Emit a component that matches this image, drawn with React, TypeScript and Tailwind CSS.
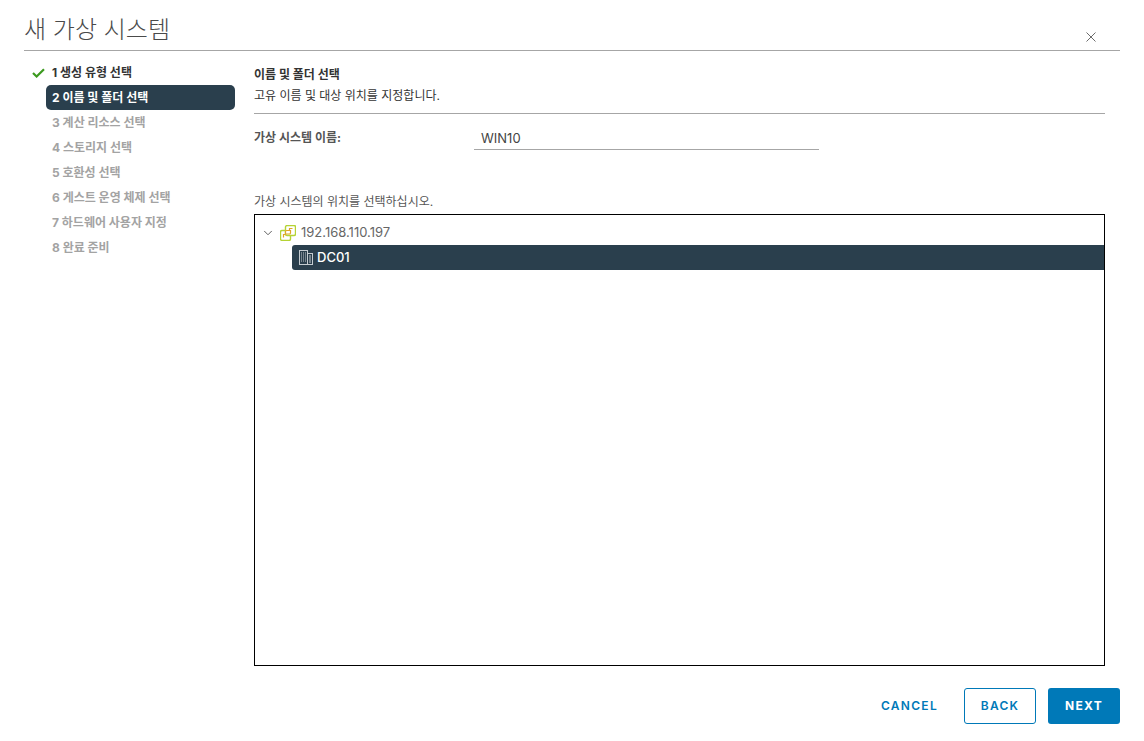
import { ChevronDown } from "lucide-react";

const steps = [
  "1 생성 유형 선택",
  "2 이름 및 폴더 선택",
  "3 계산 리소스 선택",
  "4 스토리지 선택",
  "5 호환성 선택",
  "6 게스트 운영 체제 선택",
  "7 하드웨어 사용자 지정",
  "8 완료 준비",
];

const font = "font-['Inter','Noto_Sans_CJK_KR',sans-serif]";

function VcenterIcon() {
  return (
    <svg width="16" height="16" viewBox="0 0 16 16" fill="none" className="shrink-0">
      <rect x="0.5" y="5.5" width="10" height="10" rx="1.5" fill="#fff" stroke="#b5d334" strokeWidth="1.4" />
      <rect x="5.5" y="0.5" width="10" height="10" rx="1.5" fill="#fff" stroke="#b5d334" strokeWidth="1.4" />
      <path d="M5.5 8.5V6.5a1 1 0 0 1 1-1h4v2.5a1 1 0 0 1-1 1h-4z" fill="#fff" stroke="#e0a526" strokeWidth="1.2" />
      <path d="M3.5 12.5v-3h2M12.5 3.5h-3v2" stroke="#e0a526" strokeWidth="1.2" />
    </svg>
  );
}

function DatacenterIcon() {
  return (
    <svg width="14" height="15" viewBox="0 0 14 15" fill="none" className="shrink-0" stroke="#c5ccd1">
      <rect x="0.5" y="0.5" width="8" height="14" />
      <rect x="8.5" y="3.5" width="5" height="11" />
      <path d="M2 3h1M4 3h1M6 3h1M2 5h1M4 5h1M6 5h1M2 7h1M4 7h1M6 7h1M2 9h1M4 9h1M6 9h1M2 11h1M4 11h1M6 11h1M10 6h2M10 8h2M10 10h2M10 12h2" />
    </svg>
  );
}

export default function App() {
  return (
    <div className={`${font} w-[1144px] h-[741px] bg-white flex flex-col px-6 text-[#333]`}>
      <header className="h-[51px] shrink-0 flex items-end justify-between border-b border-[#a6a6a6] pb-[3px]">
        <h1 className="text-[24px] leading-[34px] font-extralight text-[#4a4a4a]">새 가상 시스템</h1>
        <svg width="10" height="10" viewBox="0 0 10 10" className="mr-6 mb-[5px]" stroke="#6b6b6b" strokeWidth="1">
          <path d="M0.5 0.5l9 9M9.5 0.5l-9 9" />
        </svg>
      </header>

      <div className="flex-1 flex min-h-0">
        <nav className="w-[211px] shrink-0 pt-[9px] pl-[8px] flex flex-col">
          {steps.map((step, i) => (
            <div key={step} className="flex items-center h-[25px]">
              <span className="w-[14px] shrink-0 flex items-center">
                {i === 0 && (
                  <svg width="13" height="10" viewBox="0 0 13 10" fill="none">
                    <path d="M1 5l3.6 3.5L12 1.2" stroke="#3c9a1f" strokeWidth="2.2" />
                  </svg>
                )}
              </span>
              <span
                className={`w-[189px] h-[25px] flex items-center px-[6px] text-[12px] font-bold rounded-[5px] ${
                  i === 1 ? "bg-[#2a3f4d] text-white" : i === 0 ? "text-[#333]" : "text-[#a3a3a3]"
                }`}
              >
                {step}
              </span>
            </div>
          ))}
        </nav>

        <main className="flex-1 flex flex-col pl-[19px] min-w-0">
          <div className="mr-[15px] h-[63px] shrink-0 border-b border-[#a6a6a6] pt-[15px]">
            <div className="text-[12px] leading-[18px] font-bold text-[#333]">이름 및 폴더 선택</div>
            <div className="text-[12px] leading-[18px] mt-[3px] text-[#333]">고유 이름 및 대상 위치를 지정합니다.</div>
          </div>

          <div className="flex items-start mt-[13px] h-[23px] shrink-0">
            <label className="w-[220px] text-[12px] leading-[22px] font-bold text-[#555]">가상 시스템 이름:</label>
            <div className="w-[345px] h-[23px] border-b border-[#a6a6a6] px-[7px] text-[13px] leading-[22px] text-[#444]">WIN10</div>
          </div>

          <p className="text-[12px] leading-[18px] mt-[43px] text-[#565656]">가상 시스템의 위치를 선택하십시오.</p>

          <div className="mt-[3px] mr-[15px] h-[452px] shrink-0 border border-black pt-[5px] flex flex-col">
            <div className="h-[25px] flex items-center pl-[6px] gap-[5px]">
              <ChevronDown size={14} strokeWidth={1.6} className="text-[#555] shrink-0" />
              <VcenterIcon />
              <span className="text-[13px] text-[#666]">192.168.110.197</span>
            </div>
            <div className="ml-[37px] h-[25px] flex items-center pl-[7px] gap-[4px] bg-[#2a3f4d] rounded-l-[3px]">
              <DatacenterIcon />
              <span className="text-[13px] font-medium text-white">DC01</span>
            </div>
          </div>

          <div className="flex-1 flex items-start justify-end pt-[22px] text-[12px] font-semibold tracking-[1.3px]">
            <button className="h-[36px] px-[18px] text-[#0079b8]">CANCEL</button>
            <button className="h-[36px] w-[72px] ml-[8px] rounded-[3px] border border-[#0079b8] text-[#0079b8]">BACK</button>
            <button className="h-[36px] w-[72px] ml-[12px] rounded-[3px] bg-[#0079b8] text-white font-bold">NEXT</button>
          </div>
        </main>
      </div>
    </div>
  );
}
